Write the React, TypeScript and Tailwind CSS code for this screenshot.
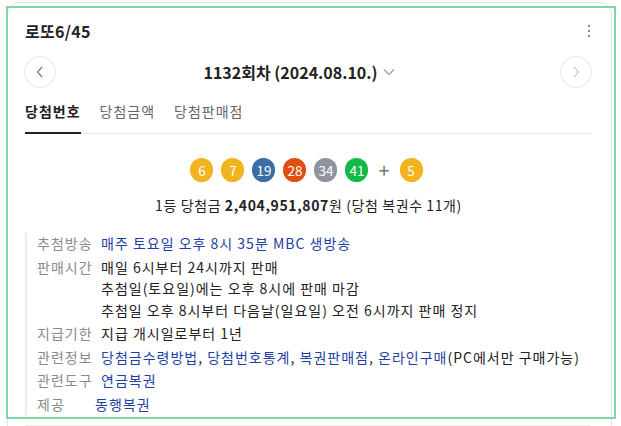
const balls = [
  { n: 6, c: "bg-[#f2b41e]" },
  { n: 7, c: "bg-[#f2b41e]" },
  { n: 19, c: "bg-[#3b6ea5]" },
  { n: 28, c: "bg-[#df4f10]" },
  { n: 34, c: "bg-[#8f929f]" },
  { n: 41, c: "bg-[#12bb49]" },
];

function Ball({ n, c }: { n: number; c: string }) {
  return (
    <div className={`w-[23px] h-[24px] rounded-full ${c} text-white text-[13.5px] flex items-center justify-center`}>
      {n}
    </div>
  );
}

const link = "text-[#1f3fa6]";

export default function App() {
  return (
    <div className="relative w-[621px] h-[426px] overflow-hidden bg-white text-[#222] font-['Noto_Sans_CJK_KR',sans-serif]">

      <div className="ml-[7px] mt-[2px] w-[605px] rounded-[12px] border border-[#e4e4e4] pl-[17px] pr-[19px] pt-[17px]">

        <div className="flex justify-between items-center h-[22px]">
          <h2 className="text-[16px] font-bold leading-none tracking-[0.3px]">로또6/45</h2>
          <svg width="4" height="12" viewBox="0 0 4 12" className="mr-[1px]">
            <rect x="1" y="0" width="2" height="2" fill="#888" />
            <rect x="1" y="5" width="2" height="2" fill="#888" />
            <rect x="1" y="10" width="2" height="2" fill="#888" />
          </svg>
        </div>

        <div className="mt-[14px] flex items-center justify-between h-[32px]">
          <button className="-ml-px w-[32px] h-[32px] rounded-full border border-[#e6e6e6] flex items-center justify-center">
            <svg width="8" height="12" viewBox="0 0 8 12">
              <path d="M6 1 L1.5 6 L6 11" fill="none" stroke="#777" strokeWidth="1.2" />
            </svg>
          </button>

          <div className="flex items-center gap-[5px] mr-[18px]">
            <span className="text-[16px] font-bold">1132회차 (2024.08.10.)</span>
            <svg width="12" height="8" viewBox="0 0 12 8">
              <path d="M1 1.5 L6 6.5 L11 1.5" fill="none" stroke="#999" strokeWidth="1.1" />
            </svg>
          </div>

          <button className="w-[32px] h-[32px] rounded-full border border-[#e6e6e6] flex items-center justify-center">
            <svg width="8" height="12" viewBox="0 0 8 12">
              <path d="M2 1 L6.5 6 L2 11" fill="none" stroke="#ccc" strokeWidth="1.2" />
            </svg>
          </button>
        </div>

        <div className="mt-[13px] flex gap-[19px] border-b border-[#e8e8e8] text-[14px] tracking-[1px]">
          <div className="pb-[10px] font-bold border-b-2 border-[#222] -mb-px">당첨번호</div>
          <div className="pb-[10px] text-[#666]">당첨금액</div>
          <div className="pb-[10px] text-[#666]">당첨판매점</div>
        </div>

        <div className="mt-[24px] flex items-center justify-center gap-[8px] mr-[4px]">
          {balls.map((b) => (
            <Ball key={b.n} n={b.n} c={b.c} />
          ))}
          <span className="text-[20px] leading-none text-[#777] mx-[2px]">+</span>
          <Ball n={5} c="bg-[#f2b41e]" />
        </div>

        <div className="mt-[12px] text-center text-[14px] leading-[22px] tracking-[0.6px]">
          1등 당첨금 <b>2,404,951,807</b>원 (당첨 복권수 11개)
        </div>

        <div className="mt-[17px] border-l-2 border-[#ececec] pl-[10px] text-[14px] leading-[21.5px] tracking-[1px] flex flex-col gap-[2px]">
          <div className="flex">
            <span className="w-[64px] text-[#8a8a8a]">추첨방송</span>
            <span className={link}>매주 토요일 오후 8시 35분 MBC 생방송</span>
          </div>
          <div className="flex">
            <span className="w-[64px] text-[#8a8a8a]">판매시간</span>
            <div className="flex flex-col">
              <span>매일 6시부터 24시까지 판매</span>
              <span>추첨일(토요일)에는 오후 8시에 판매 마감</span>
              <span>추첨일 오후 8시부터 다음날(일요일) 오전 6시까지 판매 정지</span>
            </div>
          </div>
          <div className="flex">
            <span className="w-[64px] text-[#8a8a8a]">지급기한</span>
            <span>지급 개시일로부터 1년</span>
          </div>
          <div className="flex">
            <span className="w-[64px] text-[#8a8a8a]">관련정보</span>
            <span>
              <span className={link}>당첨금수령방법</span>,{" "}
              <span className={link}>당첨번호통계</span>,{" "}
              <span className={link}>복권판매점</span>,{" "}
              <span className={link}>온라인구매</span>(PC에서만 구매가능)
            </span>
          </div>
          <div className="flex">
            <span className="w-[64px] text-[#8a8a8a]">관련도구</span>
            <span className={link}>연금복권</span>
          </div>
          <div className="flex">
            <span className="w-[58px] text-[#8a8a8a]">제공</span>
            <span className={link}>동행복권</span>
          </div>
        </div>

        <div className="mt-[10px] mr-[2px] border-t-2 border-[#ededed] h-[20px]"></div>
      </div>

      <div className="absolute left-[6px] top-[6px] w-[610px] h-[413px] border-2 border-[#7fd5a3] pointer-events-none"></div>
    </div>
  );
}
